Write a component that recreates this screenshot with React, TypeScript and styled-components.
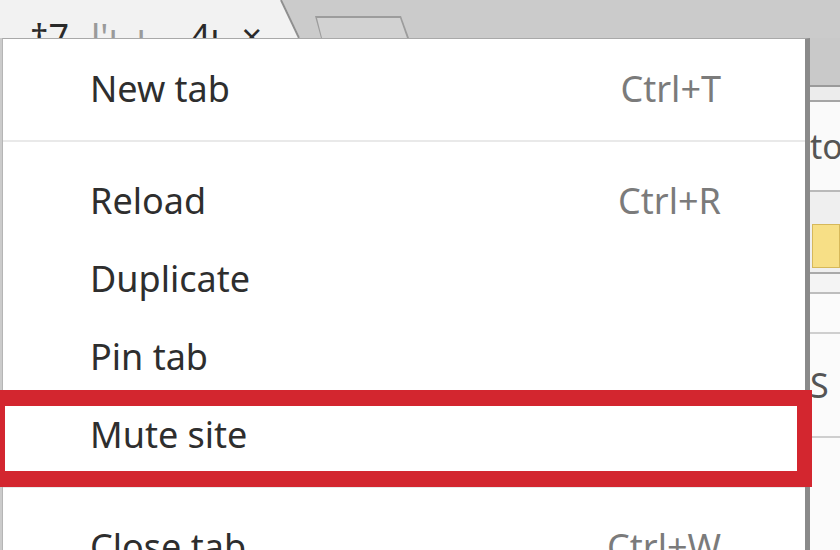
import React from "react";
import styled, { createGlobalStyle } from "styled-components";

const Global = createGlobalStyle`
  html, body { margin: 0; padding: 0; }
  body { width: 840px; height: 550px; overflow: hidden; background: #cbcbcb; font-family: "Noto Sans", "Open Sans", sans-serif; }
`;

const Page = styled.div`
  position: relative;
  width: 840px;
  height: 550px;
  overflow: hidden;
  display: flex;
  flex-direction: column;
  background: #cbcbcb;
`;

const TabBar = styled.div`
  height: 38px;
  flex: none;
  display: flex;
  align-items: flex-end;
  background: #cbcbcb;
  position: relative;
`;

const ActiveTab = styled.div`
  width: 300px;
  height: 38px;
  background: #f2f2f2;
  clip-path: polygon(0 0, 282px 0, 300px 38px, 0 38px);
  overflow: hidden;
  position: relative;
`;

const TabEdge = styled.svg`
  position: absolute;
  left: 276px;
  top: 0;
`;

const TabTitle = styled.div`
  margin-top: 14px;
  padding-left: 30px;
  display: flex;
  font-size: 36px;
  line-height: 46px;
  white-space: pre;
`;

const TitleBit = styled.span<{ $faint?: boolean; $gap?: number }>`
  margin-left: ${(p) => p.$gap ?? 0}px;
  color: ${(p) => (p.$faint ? "#9a9a9a" : "#2a2a2a")};
`;

const NewTabButton = styled.div`
  margin-left: 15px;
  width: 94px;
  height: 22px;
  background: #9c9c9c;
  clip-path: polygon(0 0, 86px 0, 94px 22px, 6px 22px);
  display: flex;
  padding: 2px 2px 0 2px;
  box-sizing: border-box;
`;

const NewTabInner = styled.div`
  flex: 1;
  background: #d2d2d2;
  clip-path: polygon(0 0, 83px 0, 90px 20px, 5px 20px);
`;

const Body = styled.div`
  flex: 1;
  display: flex;
`;

const Menu = styled.div`
  margin-left: 2px;
  width: 808px;
  flex: none;
  background: #fff;
  border-left: 1px solid #b5b5b5;
  border-top: 1px solid #a9a9a9;
  border-right: 5px solid #8a8a8a;
  box-sizing: border-box;
  padding-top: 10px;
  display: flex;
  flex-direction: column;
`;

const Item = styled.div`
  height: 78px;
  flex: none;
  display: flex;
  align-items: center;
  justify-content: space-between;
  padding-left: 87px;
  padding-right: 84px;
  font-size: 36px;
  color: #2e2e2e;
`;

const Shortcut = styled.span`
  color: #7b7b7b;
`;

const Separator = styled.div`
  height: 34px;
  flex: none;
  display: flex;
  flex-direction: column;
  &::before {
    content: "";
    margin-top: 13px;
    height: 2px;
    background: #e9e9e9;
  }
`;

const Strip = styled.div`
  flex: 1;
  display: flex;
  flex-direction: column;
  background: #f7f7f7;
  overflow: hidden;
`;

const StripBand = styled.div<{ $h: number; $bg: string; $line?: string; $align?: string }>`
  height: ${(p) => p.$h}px;
  flex: none;
  background: ${(p) => p.$bg};
  border-bottom: ${(p) => (p.$line ? `2px solid ${p.$line}` : "none")};
  overflow: hidden;
  white-space: nowrap;
  font-size: 34px;
  color: #555;
  display: flex;
  align-items: ${(p) => p.$align ?? "center"};
`;

const YellowBox = styled.div`
  margin-left: 2px;
  margin-bottom: 4px;
  width: 40px;
  height: 42px;
  background: #f7df86;
  border: 1px solid #d6b85a;
`;

const Highlight = styled.div`
  position: absolute;
  left: -11px;
  top: 390px;
  width: 823px;
  height: 97px;
  box-sizing: border-box;
  border: 16px solid #d3262f;
  border-right-width: 15px;
  pointer-events: none;
`;

const items = [
  { label: "New tab", key: "Ctrl+T" },
  "sep",
  { label: "Reload", key: "Ctrl+R" },
  { label: "Duplicate" },
  { label: "Pin tab" },
  { label: "Mute site" },
  "sep",
  { label: "Close tab", key: "Ctrl+W" },
] as const;

export default function App() {
  return (
    <Page>
      <Global />
      <TabBar>
        <ActiveTab>
          <TabTitle>
            <TitleBit>‡7</TitleBit>
            <TitleBit $faint $gap={22}>{"l'ı  ı"}</TitleBit>
            <TitleBit $gap={44}>4ı</TitleBit>
            <TitleBit $gap={22}>×</TitleBit>
          </TabTitle>
        </ActiveTab>
        <TabEdge width="30" height="38" viewBox="0 0 30 38">
          <line x1="5" y1="0" x2="23" y2="38" stroke="#8f8f8f" strokeWidth="2" />
        </TabEdge>
        <NewTabButton>
          <NewTabInner />
        </NewTabButton>
      </TabBar>
      <Body>
        <Menu>
          {items.map((it, i) =>
            it === "sep" ? (
              <Separator key={i} />
            ) : (
              <Item key={i}>
                <span>{it.label}</span>
                {"key" in it && it.key ? <Shortcut>{it.key}</Shortcut> : null}
              </Item>
            )
          )}
        </Menu>
        <Strip>
          <StripBand $h={47} $bg="#c9c9c9" $line="#9a9a9a" />
          <StripBand $h={13} $bg="#ececec" $line="#a5a5a5" />
          <StripBand $h={88} $bg="#fafafa" $line="#b9b9b9">to</StripBand>
          <StripBand $h={80} $bg="#efefef" $line="#a9a9a9" $align="flex-end">
            <YellowBox />
          </StripBand>
          <StripBand $h={18} $bg="#f4f4f4" $line="#bdbdbd" />
          <StripBand $h={38} $bg="#fbfbfb" $line="#cfcfcf" />
          <StripBand $h={102} $bg="#fbfbfb" $line="#cfcfcf">S</StripBand>
          <StripBand $h={120} $bg="#fbfbfb" />
        </Strip>
      </Body>
      <Highlight />
    </Page>
  );
}
